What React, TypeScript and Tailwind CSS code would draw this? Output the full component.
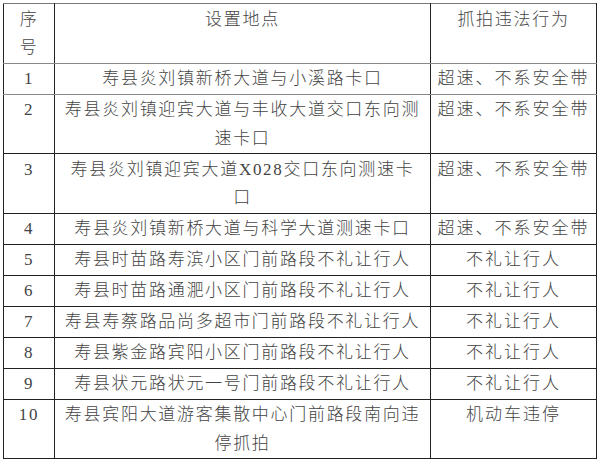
import { Fragment } from "react";

const rows: { no: string; place: string[]; act: string }[] = [
  { no: "1", place: ["寿县炎刘镇新桥大道与小溪路卡口"], act: "超速、不系安全带" },
  { no: "2", place: ["寿县炎刘镇迎宾大道与丰收大道交口东向测速卡口"], act: "超速、不系安全带" },
  { no: "3", place: ["寿县炎刘镇迎宾大道X028交口东向测速卡", "口"], act: "超速、不系安全带" },
  { no: "4", place: ["寿县炎刘镇新桥大道与科学大道测速卡口"], act: "超速、不系安全带" },
  { no: "5", place: ["寿县时苗路寿滨小区门前路段不礼让行人"], act: "不礼让行人" },
  { no: "6", place: ["寿县时苗路通淝小区门前路段不礼让行人"], act: "不礼让行人" },
  { no: "7", place: ["寿县寿蔡路品尚多超市门前路段不礼让行人"], act: "不礼让行人" },
  { no: "8", place: ["寿县紫金路宾阳小区门前路段不礼让行人"], act: "不礼让行人" },
  { no: "9", place: ["寿县状元路状元一号门前路段不礼让行人"], act: "不礼让行人" },
  { no: "10", place: ["寿县宾阳大道游客集散中心门前路段南向违停抓拍"], act: "机动车违停" },
];

const cell =
  "border-[1.5px] border-[#222] align-top text-center pt-[1.5px] leading-[28.5px] px-[4px]";

export default function App() {
  return (
    <div className="w-[600px] h-[464px] bg-white pt-[3px] pl-[3px]">
      <table
        className="table-fixed border-collapse w-[593px] text-[17px] tracking-[1.7px] text-[#444] font-light"
        style={{ fontFamily: '"Liberation Serif", "Noto Sans CJK SC", serif' }}
      >
        <colgroup>
          <col className="w-[51px]" />
          <col className="w-[376px]" />
          <col className="w-[166px]" />
        </colgroup>
        <thead>
          <tr>
            <th className={`${cell} font-light border-t-[#777] border-b-[#888]`}>
              序<br />号
            </th>
            <th className={`${cell} font-light border-t-[#777] border-b-[#888]`}>设置地点</th>
            <th className={`${cell} font-light border-t-[#777] border-b-[#888]`}>抓拍违法行为</th>
          </tr>
        </thead>
        <tbody>
          {rows.map((r, i) => (
            <tr key={r.no}>
              <td className={`${cell} ${i === 0 ? "border-b-[#888]" : ""}`}>{r.no}</td>
              <td className={`${cell} ${i === 0 ? "border-b-[#888]" : ""}`}>
                {r.place.map((line, j) => (
                  <Fragment key={j}>
                    {j > 0 && <br />}
                    {line}
                  </Fragment>
                ))}
              </td>
              <td className={`${cell} ${i === 0 ? "border-b-[#888]" : ""} tracking-[2px]`}>
                {r.act}
              </td>
            </tr>
          ))}
        </tbody>
      </table>
    </div>
  );
}
